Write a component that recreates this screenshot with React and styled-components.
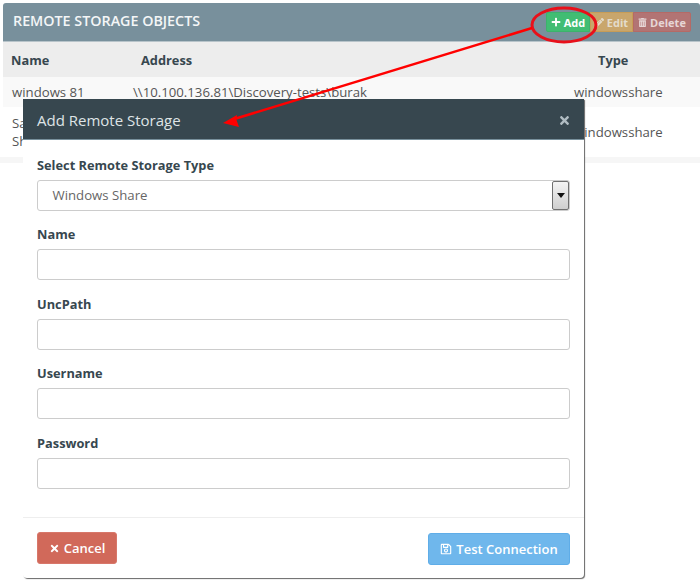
import styled, { createGlobalStyle } from 'styled-components';
import { FaPlus, FaPencilAlt, FaTrashAlt, FaTimes, FaRegSave } from 'react-icons/fa';

const GlobalStyle = createGlobalStyle`
  html, body {
    margin: 0;
    background: #fff;
  }
  body {
    font-family: "Open Sans", "Liberation Sans", sans-serif;
    color: #333;
  }
`;

const App = () => {
    return (
        <Page>
            <GlobalStyle />

            <Panel>
                <PanelHeader>
                    <PanelTitle>REMOTE STORAGE OBJECTS</PanelTitle>
                    <ButtonGroup>
                        <ToolButton $bg="#41bd73" $border="#3cb36b" $color="#fff" $w={44}><FaPlus size={10} /> Add</ToolButton>
                        <ToolButton $bg="#c9a66c" $border="#c79c57" $color="#e4dccb" $w={43}><FaPencilAlt size={9} /> Edit</ToolButton>
                        <ToolButton $bg="#b27474" $border="#b56a66" $color="#e6d6d6" $w={58}><FaTrashAlt size={9} /> Delete</ToolButton>
                    </ButtonGroup>
                </PanelHeader>

                <HeadRow>
                    <span>Name</span>
                    <span>Address</span>
                    <span>Type</span>
                </HeadRow>
                <BodyRow $h={30} $bg="#f9f9f9">
                    <span>windows 81</span>
                    <span>\\10.100.136.81\Discovery-tests\burak</span>
                    <span>windowsshare</span>
                </BodyRow>
                <BodyRow $h={50} $bg="#fff">
                    <span>Sample<br />Share</span>
                    <span />
                    <span>windowsshare</span>
                </BodyRow>
                <PanelFooter />
            </Panel>

            <Modal>
                <ModalHeader>
                    <ModalTitle>Add Remote Storage</ModalTitle>
                    <CloseIcon><FaTimes size={13} /></CloseIcon>
                </ModalHeader>

                <ModalBody>
                    <Field>
                        <FieldLabel>Select Remote Storage Type</FieldLabel>
                        <SelectBox>
                            Windows Share
                            <SelectArrow>
                                <svg width="8" height="5" viewBox="0 0 8 5"><path d="M0 0h8L4 5z" fill="#111" /></svg>
                            </SelectArrow>
                        </SelectBox>
                    </Field>
                    <Field>
                        <FieldLabel>Name</FieldLabel>
                        <TextInput />
                    </Field>
                    <Field>
                        <FieldLabel>UncPath</FieldLabel>
                        <TextInput />
                    </Field>
                    <Field>
                        <FieldLabel>Username</FieldLabel>
                        <TextInput />
                    </Field>
                    <Field>
                        <FieldLabel>Password</FieldLabel>
                        <TextInput />
                    </Field>
                </ModalBody>

                <ModalFooter>
                    <CancelButton><FaTimes size={11} /> Cancel</CancelButton>
                    <TestButton><FaRegSave size={12} /> Test Connection</TestButton>
                </ModalFooter>
            </Modal>

            <Annotation width="700" height="580" viewBox="0 0 700 580">
                <ellipse cx="564" cy="25" rx="32" ry="17" fill="none" stroke="#e8101a" strokeWidth="3" />
                <path d="M532 28 L236 118.5" stroke="#f00" strokeWidth="2.5" fill="none" />
                <path d="M223 123 L237 115 L236.5 120 L239 127 Z" fill="#f00" />
            </Annotation>
        </Page>
    )
}

export default App;

// PAGE //
const Page = styled.div`
  position: relative;
  width: 700px;
  height: 580px;
  overflow: hidden;
  padding: 3px 0 0 3px;
  box-sizing: border-box;
`;

const Panel = styled.div`
  width: 697px;
  font-size: 13px;
`;

const PanelHeader = styled.div`
  height: 39px;
  box-sizing: border-box;
  background: #78909c;
  border-radius: 3px 3px 0 0;
  border-bottom: 1px solid #b8c4ca;
  padding: 0 9px 0 10px;
  display: flex;
  justify-content: space-between;
  align-items: flex-start;
`;

const PanelTitle = styled.div`
  color: #f4f6f7;
  font-size: 14.3px;
  font-weight: 600;
  line-height: 36px;
`;

const ButtonGroup = styled.div`
  display: flex;
  margin-top: 9px;
`;

const ToolButton = styled.div`
  width: ${(p) => p.$w}px;
  height: 20px;
  box-sizing: border-box;
  background: ${(p) => p.$bg};
  border: 1px solid ${(p) => p.$border};
  color: ${(p) => p.$color};
  font-size: 11px;
  font-weight: 700;
  display: flex;
  align-items: center;
  justify-content: center;
  gap: 3px;
  &:first-child { border-radius: 2px 0 0 2px; }
  &:last-child { border-radius: 0 2px 2px 0; }
`;

const HeadRow = styled.div`
  height: 35px;
  background: #ededed;
  display: grid;
  grid-template-columns: 130px 457px 1fr;
  align-items: center;
  padding-left: 8px;
  font-weight: 700;
  font-size: 12.8px;
  color: #37474f;
`;

const BodyRow = styled.div`
  height: ${(p) => p.$h}px;
  background: ${(p) => p.$bg};
  display: grid;
  grid-template-columns: 121px 441px 1fr;
  align-items: center;
  padding-left: 9px;
  font-size: 13.2px;
  color: #555;
  line-height: 18px;
`;

const PanelFooter = styled.div`
  height: 6px;
  margin-left: -3px;
  background: #f6f6f6;
`;

// MODAL //
const Modal = styled.div`
  position: absolute;
  left: 23px;
  top: 99px;
  width: 561px;
  height: 479px;
  background: #fff;
  border-radius: 0 0 4px 4px;
  box-shadow: 1px 1px 1px #666;
  display: flex;
  flex-direction: column;
`;

const ModalHeader = styled.div`
  height: 41px;
  flex: none;
  box-sizing: border-box;
  background: #37474f;
  border-bottom: 1px solid #78909c;
  display: flex;
  align-items: center;
  justify-content: space-between;
  padding: 2px 13px 0 14px;
`;

const ModalTitle = styled.div`
  color: #dfe4e6;
  font-size: 15px;
`;

const CloseIcon = styled.div`
  color: #b0bcc2;
  display: flex;
`;

const ModalBody = styled.div`
  flex: 1;
  padding: 15.5px 14px 0 14px;
  display: flex;
  flex-direction: column;
  gap: 14.5px;
`;

const Field = styled.div`
  display: flex;
  flex-direction: column;
  gap: 6px;
`;

const FieldLabel = styled.div`
  font-size: 12.8px;
  font-weight: 700;
  line-height: 18px;
  color: #37474f;
`;

const TextInput = styled.input`
  height: 31px;
  box-sizing: border-box;
  width: 100%;
  background: #fff;
  border: 1px solid #ccc;
  border-radius: 3px;
  outline: none;
`;

const SelectBox = styled.div`
  position: relative;
  height: 31px;
  box-sizing: border-box;
  border: 1px solid #ccc;
  border-radius: 3px;
  padding-left: 14.5px;
  font-size: 13.2px;
  line-height: 29px;
  color: #666;
`;

const SelectArrow = styled.div`
  position: absolute;
  right: 0;
  top: 0;
  bottom: 0;
  width: 15px;
  border: 1px solid #707070;
  border-radius: 2px;
  background: linear-gradient(#f4f4f4, #cfcfcf);
  display: flex;
  align-items: center;
  justify-content: center;
`;

const ModalFooter = styled.div`
  height: 61px;
  flex: none;
  box-sizing: border-box;
  border-top: 1px solid #eee;
  padding: 14px 14px 0 14px;
  display: flex;
  justify-content: space-between;
  align-items: flex-start;
`;

const CancelButton = styled.div`
  width: 80px;
  height: 32px;
  box-sizing: border-box;
  background: #d1695a;
  border: 1px solid #d8776a;
  border-radius: 3px;
  color: #fff;
  font-size: 13px;
  font-weight: 600;
  display: flex;
  align-items: center;
  justify-content: center;
  gap: 4px;
`;

const TestButton = styled.div`
  width: 142px;
  height: 32px;
  margin-top: 1px;
  box-sizing: border-box;
  background: #6fb7ec;
  border: 1px solid #5fade8;
  border-radius: 3px;
  color: #fff;
  font-size: 13px;
  font-weight: 600;
  display: flex;
  align-items: center;
  justify-content: center;
  gap: 4px;
`;

// ARROW + CIRCLE OVER THE SCREENSHOT //
const Annotation = styled.svg`
  position: absolute;
  left: 0;
  top: 0;
  pointer-events: none;
`;
